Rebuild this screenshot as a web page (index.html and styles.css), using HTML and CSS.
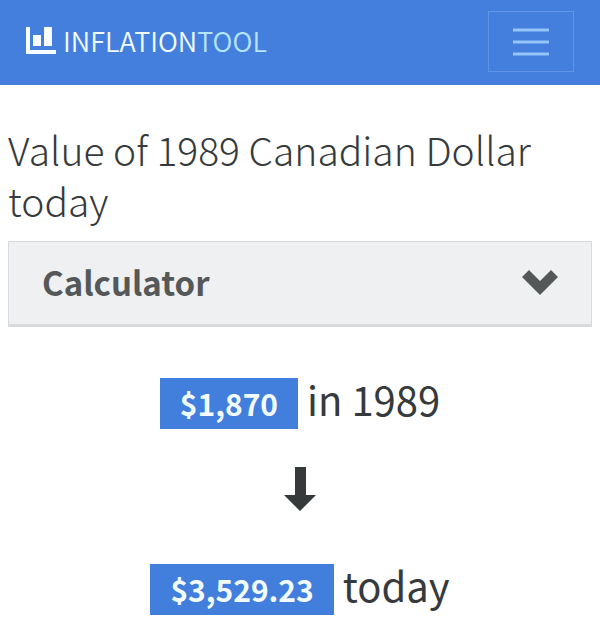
FILE: index.html
```html
<!DOCTYPE html>
<html lang="en">
<head>
    <meta charset="UTF-8">
    <meta name="viewport" content="width=device-width, initial-scale=1.0">
    <title>Value of 1989 Canadian Dollar today</title>
    <link rel="stylesheet" href="styles.css">
</head>
<body>
    <nav class="navbar">
        <a href="/" class="brand">
            <svg class="brand-icon" viewBox="0 0 30 27" aria-hidden="true">
                <path d="M0 0h4v23h26v4H0zM7 8h8v11H7zM18 0h8v19h-8z"/>
            </svg>
            <span>INFLATION<span class="brand-light">TOOL</span></span>
        </a>
        <button class="navbar-toggler" type="button" aria-label="Toggle navigation">
            <svg class="toggler-icon" viewBox="0 0 36 28" aria-hidden="true">
                <path d="M0 2h36M0 14h36M0 26h36"/>
            </svg>
        </button>
    </nav>

    <main class="container">
        <h1>Value of 1989 Canadian Dollar today</h1>

        <button class="accordion" type="button" aria-expanded="false">
            Calculator
            <svg class="chevron" viewBox="0 0 36 25" aria-hidden="true">
                <path d="M0 7l7-7 11 11L29 0l7 7-18 18z"/>
            </svg>
        </button>

        <div class="result">
            <p><span class="label">$1,870</span> in 1989</p>
            <svg class="arrow" viewBox="0 0 32 44" aria-hidden="true">
                <path d="M11 0h11v28h10L16 44 0 28h11z"/>
            </svg>
            <p><span class="label">$3,529.23</span> today</p>
        </div>
    </main>
</body>
</html>
```
FILE: styles.css
```css
body {
    margin: 0;
    font-family: 'Noto Sans CJK SC', 'Open Sans', sans-serif;
    background: #ffffff;
    color: #373a3c;
}

.navbar {
    display: flex;
    justify-content: space-between;
    align-items: center;
    padding: 11px 26px 13px;
    background: #447fdd;
}

.brand {
    display: flex;
    align-items: center;
    gap: 7px;
    padding-bottom: 2px;
    font-size: 27px;
    font-weight: 350;
    line-height: 40px;
    color: #f0fbff;
    text-decoration: none;
}

.brand-icon {
    width: 30px;
    height: 27px;
    fill: #f8fdff;
}

.brand-light {
    color: #b4e4ff;
}

.navbar-toggler {
    display: flex;
    justify-content: center;
    align-items: center;
    width: 86px;
    height: 61px;
    padding: 0;
    background: none;
    border: 1px solid #6095e6;
    cursor: pointer;
}

.toggler-icon {
    width: 36px;
    height: 28px;
    fill: none;
    stroke: #94c5fb;
    stroke-width: 3;
}

.container {
    padding: 39px 8px 0;
}

h1 {
    margin: 0 0 15px;
    font-size: 39px;
    font-weight: 300;
    line-height: 51px;
}

.accordion {
    display: flex;
    justify-content: space-between;
    align-items: center;
    width: 100%;
    padding: 15px 33px 17px;
    font-family: inherit;
    font-size: 33px;
    font-weight: 700;
    line-height: 50px;
    color: #555859;
    background: #eef0f2;
    border: 1px solid #d8dadb;
    border-bottom-width: 3px;
    cursor: pointer;
}

.chevron {
    width: 36px;
    height: 25px;
    fill: #555859;
}

.result {
    padding-top: 39px;
    text-align: center;
}

.result p {
    margin: 0;
    font-size: 40px;
    font-weight: 400;
    line-height: 66px;
}

.label {
    display: inline-block;
    padding: 0 20px;
    font-size: 30px;
    font-weight: 700;
    line-height: 51px;
    color: #f2fcff;
    background: #427edc;
}

.arrow {
    display: block;
    width: 32px;
    height: 44px;
    margin: 35px auto 41px;
    fill: #373a3a;
}
```
